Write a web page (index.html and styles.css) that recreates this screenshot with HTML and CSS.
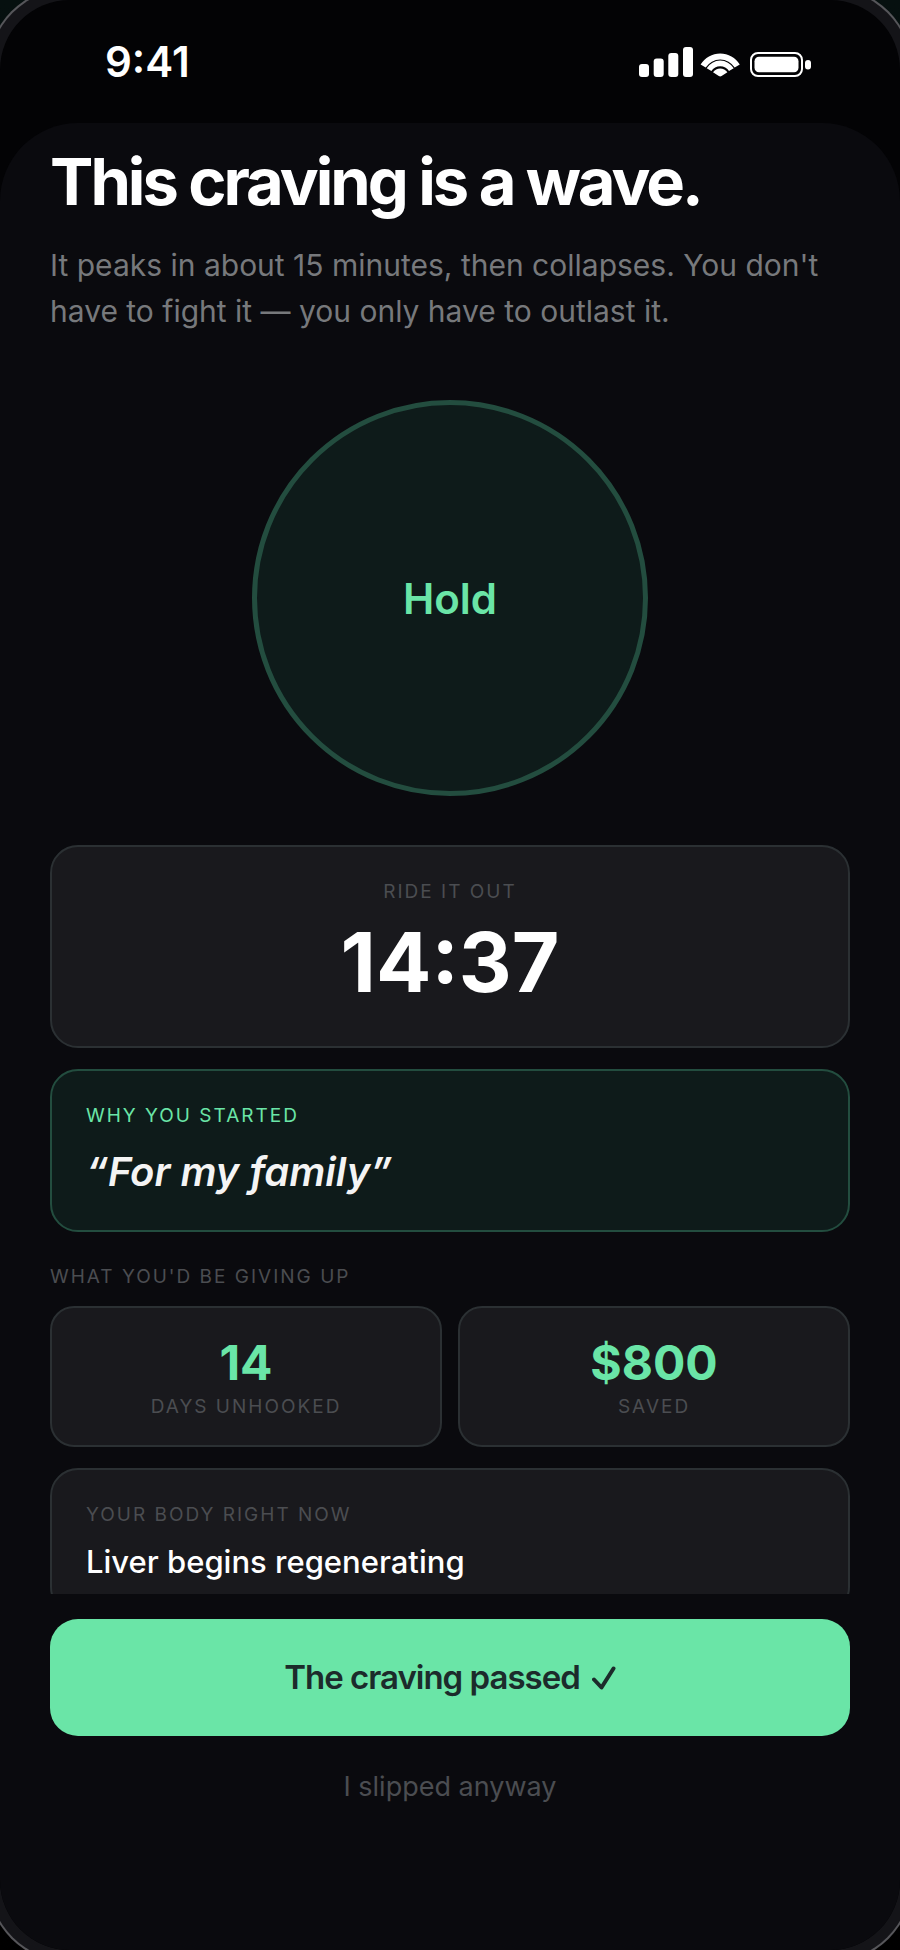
FILE: index.html
```html
<!DOCTYPE html>
<html lang="en">
<head>
  <meta charset="UTF-8">
  <meta name="viewport" content="width=device-width, initial-scale=1">
  <title>This craving is a wave.</title>
  <link rel="stylesheet" href="styles.css">
</head>
<body>

<div class="phone">
  <!-- Status bar -->
  <header class="status-bar">
    <time class="clock">9:41</time>
    <svg class="status-icons" viewBox="0 0 172 30" width="172" height="30" fill="#fff" aria-hidden="true">
      <rect x="0" y="17" width="10" height="13" rx="3"/>
      <rect x="14.7" y="11.5" width="10" height="18.5" rx="3"/>
      <rect x="29.3" y="6" width="10" height="24" rx="3"/>
      <rect x="44" y="0" width="10" height="30" rx="3"/>
      <g transform="translate(81.2 29.5)">
        <path d="M-19.6 -12A23 23 0 0 1 19.6 -12L14.5 -8.9A17 17 0 0 0 -14.5 -8.9Z"/>
        <path d="M-13.5 -8.3A15.8 15.8 0 0 1 13.5 -8.3L8.8 -5.4A10.3 10.3 0 0 0 -8.8 -5.4Z"/>
        <path d="M-7.2 -4.2A8.7 8.7 0 0 1 7.2 -4.2L1.4 -.4Q0 .4 -1.4 -.4Z"/>
      </g>
      <rect x="112" y="6" width="51" height="23" rx="7" fill="none" stroke="#fff" stroke-width="2"/>
      <rect x="115.5" y="9.7" width="44" height="15.6" rx="4.5"/>
      <rect x="166" y="13" width="6" height="9.5" rx="3"/>
    </svg>
  </header>

  <div class="sheet">
    <main class="content">
      <h1 class="title">This craving is a wave.</h1>
      <p class="lead">It peaks in about 15 minutes, then collapses. You don't have to fight it — you only have to outlast it.</p>

      <button class="breath" type="button">Hold</button>

      <!-- Countdown -->
      <section class="card timer">
        <h2 class="label">Ride it out</h2>
        <div class="timer-value">14:37</div>
      </section>

      <section class="card reason">
        <h2 class="label">Why you started</h2>
        <p class="quote">“For my family”</p>
      </section>

      <!-- Streak and money -->
      <section class="stakes">
        <h2 class="label">What you'd be giving up</h2>
        <div class="stats">
          <div class="stat">
            <div class="stat-value">14</div>
            <div class="label">Days unhooked</div>
          </div>
          <div class="stat">
            <div class="stat-value">$800</div>
            <div class="label">Saved</div>
          </div>
        </div>
      </section>

      <section class="card body-now">
        <h2 class="label">Your body right now</h2>
        <p class="milestone">Liver begins regenerating</p>
      </section>
    </main>

    <footer class="actions">
      <button class="passed" type="button">
        The craving passed
        <svg class="check" viewBox="0 0 24 24" width="24" height="24" aria-hidden="true">
          <path d="M2 13.5L9.5 21.5L21.5 2.5"/>
        </svg>
      </button>
      <button class="slipped" type="button">I slipped anyway</button>
    </footer>
  </div>
</div>

</body>
</html>
```
FILE: styles.css
```css
:root {
  --bg: #0a0a0e;
  --card: #19191d;
  --line: #2b3033;
  --green: #6ae5a7;
  --green-bg: #0e1b1a;
  --green-line: #234d3f;
  --muted: #77797c;
  --faint: #4b4d51;
}

* {
  box-sizing: border-box;
}

body {
  margin: 0;
  background: linear-gradient(#06100f, #000);
  color: #fff;
  font-family: Inter, "Liberation Sans", sans-serif;
  overflow: hidden;
}

h1, h2, p {
  margin: 0;
}

button {
  border: 0;
  padding: 0;
  font-family: inherit;
  cursor: pointer;
}

/* Device: the bezel is drawn around the rounded screen */
.phone {
  display: flex;
  flex-direction: column;
  height: 100vh;
  background: #030305;
  border-radius: 70px;
  box-shadow: 0 0 0 11px #141418, 0 0 0 13px #56565a;
  overflow: hidden;
}

/* Status bar */
.status-bar {
  display: flex;
  justify-content: space-between;
  align-items: center;
  padding: 37px 89px 36px 105px;
}
.clock {
  font-size: 42px;
  line-height: 50px;
  font-weight: 600;
}

/* Sheet */
.sheet {
  display: flex;
  flex-direction: column;
  flex: 1;
  min-height: 0;
  background: var(--bg);
  border-radius: 78px 78px 0 0;
}
.content {
  display: flex;
  flex-direction: column;
  flex: 1;
  min-height: 0;
  padding: 23px 50px 0;
  overflow-y: auto;
  scrollbar-width: none;
}
.content > * {
  flex-shrink: 0;
}
.title {
  font-size: 65px;
  line-height: 72px;
  font-weight: 700;
  letter-spacing: -3px;
}
.lead {
  margin-top: 24px;
  color: var(--muted);
  font-size: 30px;
  line-height: 46px;
}

/* Breathing circle */
.breath {
  align-self: center;
  width: 396px;
  aspect-ratio: 1;
  margin: 66px 0 49px;
  border: 5px solid var(--green-line);
  border-radius: 50%;
  background: var(--green-bg);
  color: var(--green);
  font-size: 42px;
  font-weight: 600;
}

/* Cards */
.card {
  padding: 33px 34px;
  border: 2px solid var(--line);
  border-radius: 28px;
  background: var(--card);
}
.label {
  color: var(--faint);
  font-size: 19px;
  line-height: 24px;
  font-weight: 400;
  letter-spacing: 2px;
  text-transform: uppercase;
}
.timer {
  text-align: center;
}
.timer-value {
  margin-top: 9px;
  font-size: 82px;
  line-height: 100px;
  font-weight: 700;
}
.reason {
  margin-top: 21px;
  border-color: var(--green-line);
  background: var(--green-bg);
}
.reason .label {
  color: var(--green);
}
.quote {
  margin-top: 18px;
  color: #f4f4f4;
  font-size: 40px;
  line-height: 51px;
  font-weight: 600;
  font-style: italic;
}

/* Stats */
.stakes {
  margin: 33px 0 21px;
}
.stats {
  display: grid;
  grid-template-columns: 1fr 1fr;
  gap: 16px;
  margin-top: 17px;
}
.stat {
  padding: 26px;
  border: 2px solid var(--line);
  border-radius: 24px;
  background: var(--card);
  text-align: center;
}
.stat-value {
  margin-bottom: 3px;
  color: var(--green);
  font-size: 48px;
  line-height: 58px;
  font-weight: 700;
}
.milestone {
  margin-top: 17px;
  font-size: 31px;
  line-height: 36px;
  font-weight: 500;
}

/* Bottom actions */
.actions {
  display: flex;
  flex-direction: column;
  padding: 25px 50px 112px;
}
.passed {
  display: flex;
  justify-content: center;
  align-items: center;
  gap: 12px;
  padding: 38px;
  border-radius: 28px;
  background: var(--green);
  color: #1c2b2b;
  font-size: 33px;
  line-height: 41px;
  font-weight: 600;
  letter-spacing: -1px;
}
.check {
  fill: none;
  stroke: currentColor;
  stroke-width: 4;
  stroke-linecap: round;
  stroke-linejoin: round;
}
.slipped {
  padding: 35px;
  background: none;
  color: var(--faint);
  font-size: 27px;
  line-height: 32px;
  font-weight: 400;
}
```
